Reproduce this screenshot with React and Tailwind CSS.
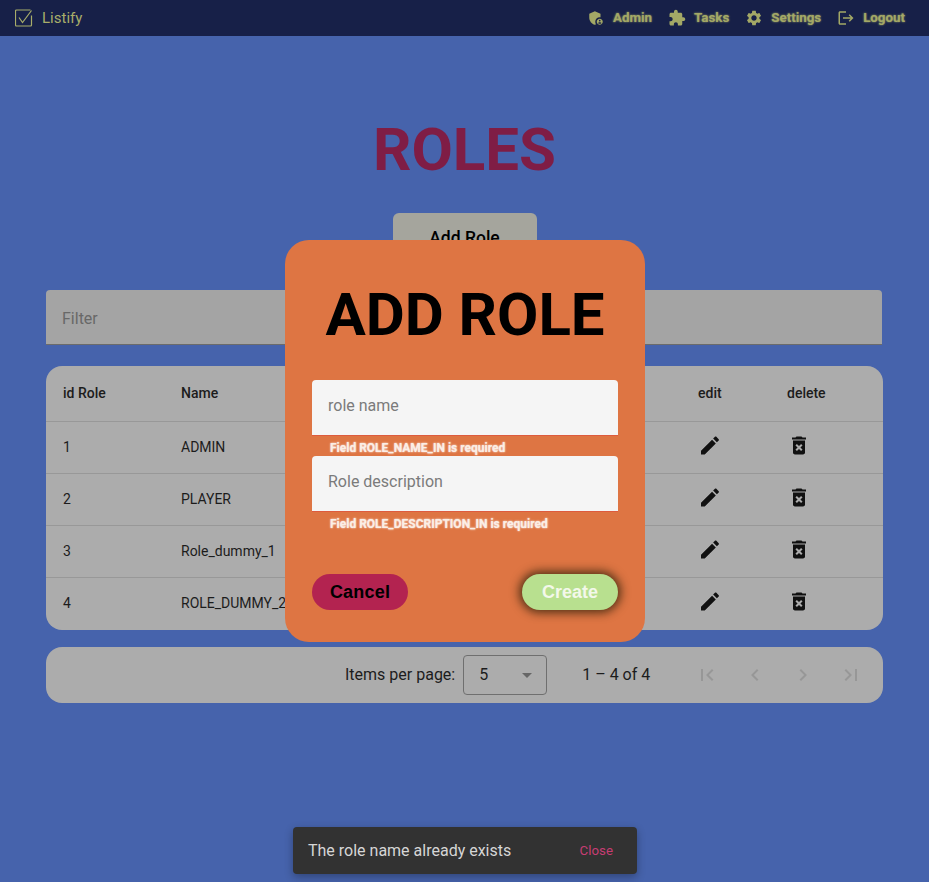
const Icon = ({ d, className }) => (
  <svg viewBox="0 0 24 24" fill="currentColor" className={className}>
    <path d={d} />
  </svg>
);

const icons = {
  admin:
    "M17 11c.34 0 .67.04 1 .09V6.27L10.5 3 3 6.27v4.91c0 4.54 3.2 8.79 7.5 9.82.55-.13 1.08-.32 1.6-.55-.69-.98-1.1-2.17-1.1-3.45 0-3.31 2.69-6 6-6zM17 13c-2.21 0-4 1.79-4 4s1.79 4 4 4 4-1.79 4-4-1.79-4-4-4zm0 1.38c.62 0 1.12.51 1.12 1.12s-.51 1.12-1.12 1.12-1.12-.51-1.12-1.12.5-1.12 1.12-1.12zm0 5.37c-.93 0-1.74-.46-2.24-1.17.05-.72 1.51-1.08 2.24-1.08s2.19.36 2.24 1.08c-.5.71-1.31 1.17-2.24 1.17z",
  tasks:
    "M20.5 11H19V7c0-1.1-.9-2-2-2h-4V3.5C13 2.12 11.88 1 10.5 1S8 2.12 8 3.5V5H4c-1.1 0-1.99.9-1.99 2v3.8H3.5c1.49 0 2.7 1.21 2.7 2.7s-1.21 2.7-2.7 2.7H2V20c0 1.1.9 2 2 2h3.8v-1.5c0-1.49 1.21-2.7 2.7-2.7 1.49 0 2.7 1.21 2.7 2.7V22H17c1.1 0 2-.9 2-2v-4h1.5c1.38 0 2.5-1.12 2.5-2.5S21.88 11 20.5 11z",
  settings:
    "M19.14 12.94c.04-.3.06-.61.06-.94 0-.32-.02-.64-.07-.94l2.03-1.58c.18-.14.23-.41.12-.61l-1.92-3.32c-.12-.22-.37-.29-.59-.22l-2.39.96c-.5-.38-1.03-.7-1.62-.94l-.36-2.54c-.04-.24-.24-.41-.48-.41h-3.84c-.24 0-.43.17-.47.41l-.36 2.54c-.59.24-1.13.57-1.62.94l-2.39-.96c-.22-.08-.47 0-.59.22L2.74 8.87c-.12.21-.08.47.12.61l2.03 1.58c-.05.3-.09.63-.09.94s.02.64.07.94l-2.03 1.58c-.18.14-.23.41-.12.61l1.92 3.32c.12.22.37.29.59.22l2.39-.96c.5.38 1.03.7 1.62.94l.36 2.54c.05.24.24.41.48.41h3.84c.24 0 .44-.17.47-.41l.36-2.54c.59-.24 1.13-.56 1.62-.94l2.39.96c.22.08.47 0 .59-.22l1.92-3.32c.12-.22.07-.47-.12-.61l-2.01-1.58zM12 15.6c-1.98 0-3.6-1.62-3.6-3.6s1.62-3.6 3.6-3.6 3.6 1.62 3.6 3.6-1.62 3.6-3.6 3.6z",
  logout:
    "M17 7l-1.41 1.41L18.17 11H8v2h10.17l-2.58 2.58L17 17l5-5zM4 5h8V3H4c-1.1 0-2 .9-2 2v14c0 1.1.9 2 2 2h8v-2H4V5z",
  edit:
    "M3 17.25V21h3.75L17.81 9.94l-3.75-3.75L3 17.25zM20.71 7.04c.39-.39.39-1.02 0-1.41l-2.34-2.34c-.39-.39-1.02-.39-1.41 0l-1.83 1.83 3.75 3.75 1.83-1.83z",
  remove:
    "M6 19c0 1.1.9 2 2 2h8c1.1 0 2-.9 2-2V7H6v12zm2.46-7.12l1.41-1.41L12 12.59l2.12-2.12 1.41 1.41L13.41 14l2.12 2.12-1.41 1.41L12 15.41l-2.12 2.12-1.41-1.41L10.59 14l-2.13-2.12zM15.5 4l-1-1h-5l-1 1H5v2h14V4z",
  first: "M18.41 16.59L13.82 12l4.59-4.59L17 6l-6 6 6 6zM6 6h2v12H6z",
  prev: "M15.41 7.41L14 6l-6 6 6 6 1.41-1.41L10.83 12z",
  next: "M10 6L8.59 7.41 13.17 12l-4.58 4.59L10 18l6-6z",
  last: "M5.59 7.41L10.18 12l-4.59 4.59L7 18l6-6-6-6zM16 6h2v12h-2z",
};

const navItems = [
  { label: "Admin", icon: icons.admin },
  { label: "Tasks", icon: icons.tasks },
  { label: "Settings", icon: icons.settings },
  { label: "Logout", icon: icons.logout },
];

const roles = [
  { id: 1, name: "ADMIN" },
  { id: 2, name: "PLAYER" },
  { id: 3, name: "Role_dummy_1" },
  { id: 4, name: "ROLE_DUMMY_2" },
];

const rowGrid = "grid grid-cols-[118px_517px_89px_1fr] items-center pl-[17px] pb-[2px]";

const Field = ({ placeholder, error, className }) => (
  <div className={className}>
    <div className="h-[56px] rounded-t bg-[#f5f5f5] border-b border-[#dd5b3e] pl-4 pt-[14px] text-base leading-[24px] text-[#7b7b7b]">
      {placeholder}
    </div>
    <p className="pl-[18px] mt-[4px] h-[16px] text-xs leading-4 font-bold text-[#fbeee6] [text-shadow:0_0_2px_#fff]">
      {error}
    </p>
  </div>
);

export default function App() {
  return (
    <div className="relative h-[882px] overflow-hidden bg-[#4663ac] font-['Roboto',sans-serif]">
      <header className="flex h-9 items-center justify-between bg-[#172048] pl-[15px] pr-[24px] text-[#a8ad6a]">
        <div className="flex items-center gap-[9px]">
          <svg viewBox="0 0 18 18" fill="none" stroke="currentColor" className="h-[18px] w-[18px]">
            <path d="M16.5 6.5V16a1 1 0 0 1-1 1H1.5a1 1 0 0 1-1-1V2a1 1 0 0 1 1-1h14" strokeWidth="1.2" />
            <path d="M4 8.5 7.5 13.5 16.5 1.5" strokeWidth="1.2" />
          </svg>
          <span className="text-[15px]">Listify</span>
        </div>
        <nav className="flex items-center gap-4">
          {navItems.map((item) => (
            <a key={item.label} className="flex items-center gap-2 text-[13.33px] font-bold text-[#a3a866] [text-shadow:0_0_2px_#a3a866]">
              <Icon d={item.icon} className="h-[18px] w-[18px]" />
              {item.label}
            </a>
          ))}
        </nav>
      </header>

      <main className="px-[46px]">
        <h1 className="mt-[79px] text-center text-[60px] leading-[70px] font-bold text-[#7f1d45]">ROLES</h1>
        <div className="mt-[28px] flex justify-center">
          <button className="h-[48px] w-[144px] rounded-md bg-[#a5a59d] pt-[2px] text-[17.5px] font-medium text-black">
            Add Role
          </button>
        </div>
        <div className="mt-[29px] mr-px h-[55px] rounded-t-sm border-b border-[#6b6b6b] bg-[#a4a4a4] pl-4 pt-[17px] text-base leading-6 text-[#686868]">
          Filter
        </div>
        <section className="mt-[21px] overflow-hidden rounded-[16px] bg-[#acacac] text-sm text-[#1c1c1c]">
          <div className={`${rowGrid} h-[56px] border-b border-[#989898] font-medium`}>
            <span>id Role</span>
            <span>Name</span>
            <span>edit</span>
            <span>delete</span>
          </div>
          {roles.map((role, i) => (
            <div key={role.id} className={`${rowGrid} h-[52px] ${i < 3 ? "border-b border-[#989898]" : ""}`}>
              <span>{role.id}</span>
              <span>{role.name}</span>
              <Icon d={icons.edit} className="h-6 w-6 text-[#111] -translate-y-[1.5px]" />
              <Icon d={icons.remove} className="h-6 w-6 text-[#111] -translate-y-[1.5px]" />
            </div>
          ))}
        </section>
        <section className="mt-[17px] flex h-[56px] items-center rounded-[16px] bg-[#acacac] pl-[299px] text-base text-[#1c1c1c]">
          <span className="mr-[8px]">Items per page:</span>
          <div className="flex h-[40px] w-[84px] items-center justify-between rounded border border-[#6f6f6f] pl-[15px] pr-[14px]">
            <span>5</span>
            <span className="h-0 w-0 border-x-[5px] border-t-[5px] border-x-transparent border-t-[#666]" />
          </div>
          <span className="ml-[35px] w-[100px]">1 – 4 of 4</span>
          <div className="ml-[13px] flex gap-6 text-[#979797]">
            <Icon d={icons.first} className="h-6 w-6" />
            <Icon d={icons.prev} className="h-6 w-6" />
            <Icon d={icons.next} className="h-6 w-6" />
            <Icon d={icons.last} className="h-6 w-6" />
          </div>
        </section>
      </main>

      {/* dialog */}
      <div className="absolute left-[285px] top-[240px] h-[402px] w-[360px] rounded-[24px] bg-[#de7543] px-[27px] pt-[36px]">
        <h2 className="text-center text-[60px] leading-[78px] font-bold text-black whitespace-nowrap">ADD ROLE</h2>
        <Field className="mt-[26px]" placeholder="role name" error="Field ROLE_NAME_IN is required" />
        <Field placeholder="Role description" error="Field ROLE_DESCRIPTION_IN is required" />
        <div className="mt-[42px] flex justify-between font-['Liberation_Sans',sans-serif] text-lg font-bold">
          <button className="h-[36px] w-[96px] rounded-full bg-[#b32350] tracking-[0.2px] text-black">Cancel</button>
          <button className="h-[36px] w-[96px] rounded-full bg-[#b8e08f] text-[#f3f8ea] shadow-[0_0_10px_3px_rgba(40,30,10,0.75)]">Create</button>
        </div>
      </div>

      {/* snackbar */}
      <div className="absolute left-[293px] top-[827px] flex h-[47px] w-[344px] items-center justify-between rounded bg-[#323232] pl-[15px] pr-[24px] text-base text-[#d6d6d6] shadow-[0_3px_8px_rgba(0,0,0,0.3)]">
        <span>The role name already exists</span>
        <span className="text-[13.3px] text-[#c73d72]">Close</span>
      </div>
    </div>
  );
}
